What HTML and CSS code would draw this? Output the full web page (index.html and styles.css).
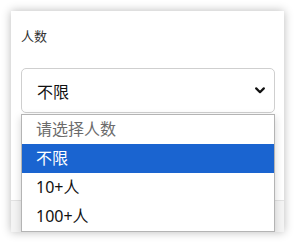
FILE: index.html
```html
<!DOCTYPE html>
<html lang="zh">
<head>
<meta charset="utf-8">
<link rel="stylesheet" href="styles.css">
</head>
<body>
<div class="card">
  <div class="content">
    <div class="label">人数</div>
    <div class="field">
      <div class="select">
        <span class="value">不限</span>
        <svg class="chev" width="10" height="7" viewBox="0 0 10 7"><path d="M1.2 1.4 L5 5.2 L8.8 1.4" fill="none" stroke="#111" stroke-width="2.2" stroke-linecap="round" stroke-linejoin="round"/></svg>
      </div>
      <ul class="menu">
        <li class="opt placeholder">请选择人数</li>
        <li class="opt active">不限</li>
        <li class="opt">10+人</li>
        <li class="opt">100+人</li>
      </ul>
    </div>
  </div>
  <div class="footer"></div>
</div>
</body>
</html>
```
FILE: styles.css
```css
html, body {
  margin: 0;
  padding: 0;
  background: #fff;
}
body {
  padding: 11px 10px 10px 11px;
  font-family: "Noto Sans", "Noto Sans CJK SC", sans-serif;
}
.card {
  width: 273px;
  height: 221px;
  background: #fff;
  box-shadow: 0 0 9px rgba(0, 0, 0, 0.28);
  display: flex;
  flex-direction: column;
  overflow: hidden;
}
.content {
  padding: 15px 10px 0 10px;
}
.label {
  font-size: 13px;
  line-height: 20px;
  color: #333;
}
.field {
  position: relative;
  margin-top: 22px;
}
.select {
  box-sizing: border-box;
  height: 45px;
  width: 254px;
  border: 1px solid #cfcfcf;
  border-radius: 5px;
  display: flex;
  align-items: center;
  justify-content: space-between;
  padding: 0 8px 0 15px;
  font-size: 16px;
  color: #111;
}
.value {
  font-family: "Noto Sans CJK SC", sans-serif;
}
.chev {
  margin-right: 1px;
}
.menu {
  position: absolute;
  top: 46px;
  left: 0;
  width: 254px;
  box-sizing: border-box;
  margin: 0;
  padding: 0;
  list-style: none;
  background: #fff;
  border: 1px solid #b4b4b4;
  box-shadow: 0 3px 8px rgba(0, 0, 0, 0.18);
  z-index: 2;
}
.opt {
  height: 29px;
  line-height: 29px;
  padding-left: 14px;
  font-size: 16px;
  color: #111;
  font-family: "Noto Sans", "Noto Sans CJK SC", sans-serif;
}
.opt.placeholder {
  color: #6b6b6b;
}
.opt.active {
  background: #1a64d0;
  color: #fff;
}
.footer {
  margin-top: auto;
  height: 31px;
  background: #f4f4f4;
  border-top: 1px solid #e2e2e2;
}
```
